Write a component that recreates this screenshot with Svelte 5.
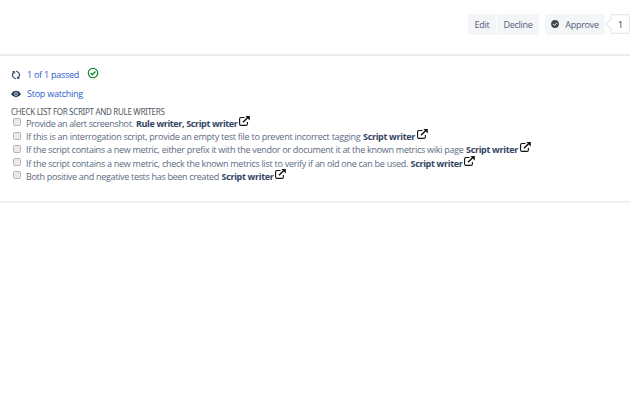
<script>
  const items = [
    { text: 'Provide an alert screenshot.', w: 107.5, who: 'Rule writer, Script writer', bw: 101.5 },
    { text: 'If this is an interrogation script, provide an empty test file to prevent incorrect tagging', w: 334.5, who: 'Script writer', bw: 52 },
    { text: 'If the script contains a new metric, either prefix it with the vendor or document it at the known metrics wiki page', w: 437.5, who: 'Script writer', bw: 52 },
    { text: 'If the script contains a new metric, check the known metrics list to verify if an old one can be used.', w: 382, who: 'Script writer', bw: 52 },
    { text: 'Both positive and negative tests has been created', w: 193, who: 'Script writer', bw: 52 }
  ];

  // Tracks a label so that it fills the given width
  function fit(node, width) {
    const natural = node.getBoundingClientRect().width;
    node.style.letterSpacing = (width - natural) / node.textContent.length + 'px';
  }
</script>

<div class="page">
  <header>
    <div class="group">
      <button class="edit"><span use:fit={15}>Edit</span></button>
      <button class="decline"><span use:fit={29}>Decline</span></button>
    </div>
    <button class="approve">
      <svg width="8" height="8" viewBox="0 0 8 8"><circle cx="4" cy="4" r="3.9" fill="#42474f" /><path d="M2.2 4l1.3 1.4L5.9 2.8" fill="none" stroke="#f4f5f7" stroke-width="1" /></svg>
      <span use:fit={33.5}>Approve</span>
    </button>
    <div class="badge">
      <svg width="25" height="20" viewBox="0 0 25 20"><path d="M7.5.7H22.5Q24.3.7 24.3 2.5V17.5Q24.3 19.3 22.5 19.3H7.5Q5.7 19.3 5.7 17.5V14.6L1 10L5.7 5.4V2.5Q5.7.7 7.5.7Z" fill="#fff" stroke="#e4e6ea" stroke-width="1.2" /></svg>
      <span>1</span>
    </div>
  </header>

  <main>
    <div class="status">
      <svg width="10" height="10" viewBox="0 0 10 10" fill="none" stroke="#344563" stroke-width="1.2"><path d="M3.6 8.3A3.6 3.6 0 0 1 3.2 1.9M6.4 1.7A3.6 3.6 0 0 1 6.8 8.1" /><path d="M1.6 1.5H3.7V3.5M8.4 8.5H6.3V6.5" stroke-width=".9" /><path d="M5.1 1.4Q5.8 1.4 6.5 1.7M4.9 8.6Q4.2 8.6 3.5 8.3" /></svg>
      <a href="#builds"><span use:fit={52}>1 of 1 passed</span></a>
      <svg class="ok" width="12" height="12" viewBox="0 0 12 12" fill="none" stroke="#14892c" stroke-width="1.2"><circle cx="6" cy="6" r="4.7" /><path d="M3.6 6l1.8 1.8L8.4 4.5" stroke-width="1.4" /></svg>
    </div>
    <div class="status watch">
      <svg width="10" height="8" viewBox="0 0 10 8"><path d="M0 4Q2 .8 5 .8T10 4Q8 7.2 5 7.2T0 4Z" fill="#253858" /><circle cx="5" cy="4" r="1.8" fill="#fff" /><circle cx="5" cy="4" r="1" fill="#253858" /></svg>
      <a href="#watch"><span use:fit={56}>Stop watching</span></a>
    </div>

    <h2><span use:fit={153.5}>CHECK LIST FOR SCRIPT AND RULE WRITERS</span></h2>
    <ul>
      {#each items as item}
        <li>
          <i class="box"></i>
          <span use:fit={item.w}>{item.text}</span>
          <b use:fit={item.bw}>{item.who}</b>
          <svg width="11" height="10" viewBox="0 0 11 10" fill="none" stroke="#111"><path d="M5.5 1.5H2Q.6 1.5.6 3V8Q.6 9.4 2 9.4H7Q8.4 9.4 8.4 8V6" stroke-width="1.1" /><path d="M4 6.2L8.8 1.5" stroke-width="1.5" /><path d="M6.4 0H10.8V4.4Z" fill="#111" stroke="none" /></svg>
        </li>
      {/each}
    </ul>
  </main>
</div>

<style>
  :global(body) { background: #fff; }
  .page { width: 640px; height: 400px; overflow: hidden; font: 9px/13px "Open Sans", "Noto Sans", sans-serif; color: #5b6b82; }
  span, b { display: inline-block; white-space: nowrap; flex: none; }
  header { box-sizing: border-box; width: 630px; height: 56px; padding-top: 14px; border-bottom: 2px solid #ebecf0; display: flex; justify-content: flex-end; align-items: flex-start; }
  .group { display: flex; gap: 1px; margin-right: 6px; }
  button { box-sizing: border-box; height: 21px; padding: 0; border: 0; background: #f4f5f7; color: #505f79; font: inherit; display: flex; align-items: center; justify-content: center; }
  .edit { width: 28px; border-radius: 2px 0 0 2px; }
  .decline { width: 42px; border-radius: 0 2px 2px 0; }
  .approve { width: 60px; gap: 6px; border-radius: 2px; }
  .approve svg { margin-top: -1px; }
  .badge { position: relative; width: 25px; height: 20px; color: #333d4f; }
  .badge svg { display: block; }
  .badge span { position: absolute; left: 13px; top: 4px; }
  main { box-sizing: border-box; width: 630px; height: 147px; padding: 12px 0 0 11px; border-bottom: 2px solid #f0f1f3; }
  .status { height: 13px; display: flex; align-items: center; gap: 6px; }
  .status a { color: #2a60cb; text-decoration: none; display: flex; }
  .ok { margin: -3px 0 0 2px; }
  .watch { margin-top: 6px; }
  h2 { margin: 6px 0 0; font: 400 8px/11px "Noto Sans", sans-serif; color: #505761; display: flex; }
  ul { list-style: none; margin: 0; padding: 0; }
  li { height: 13.2px; display: flex; align-items: center; }
  .box { box-sizing: border-box; width: 8px; height: 8px; margin: -2.5px 5px 0 2px; border: 1px solid #b5b5b5; border-radius: 1.5px; background: #e9e9e9; }
  b { color: #344563; margin-left: 2.5px; }
  li svg { margin: -5px 0 0 1.5px; }
</style>
